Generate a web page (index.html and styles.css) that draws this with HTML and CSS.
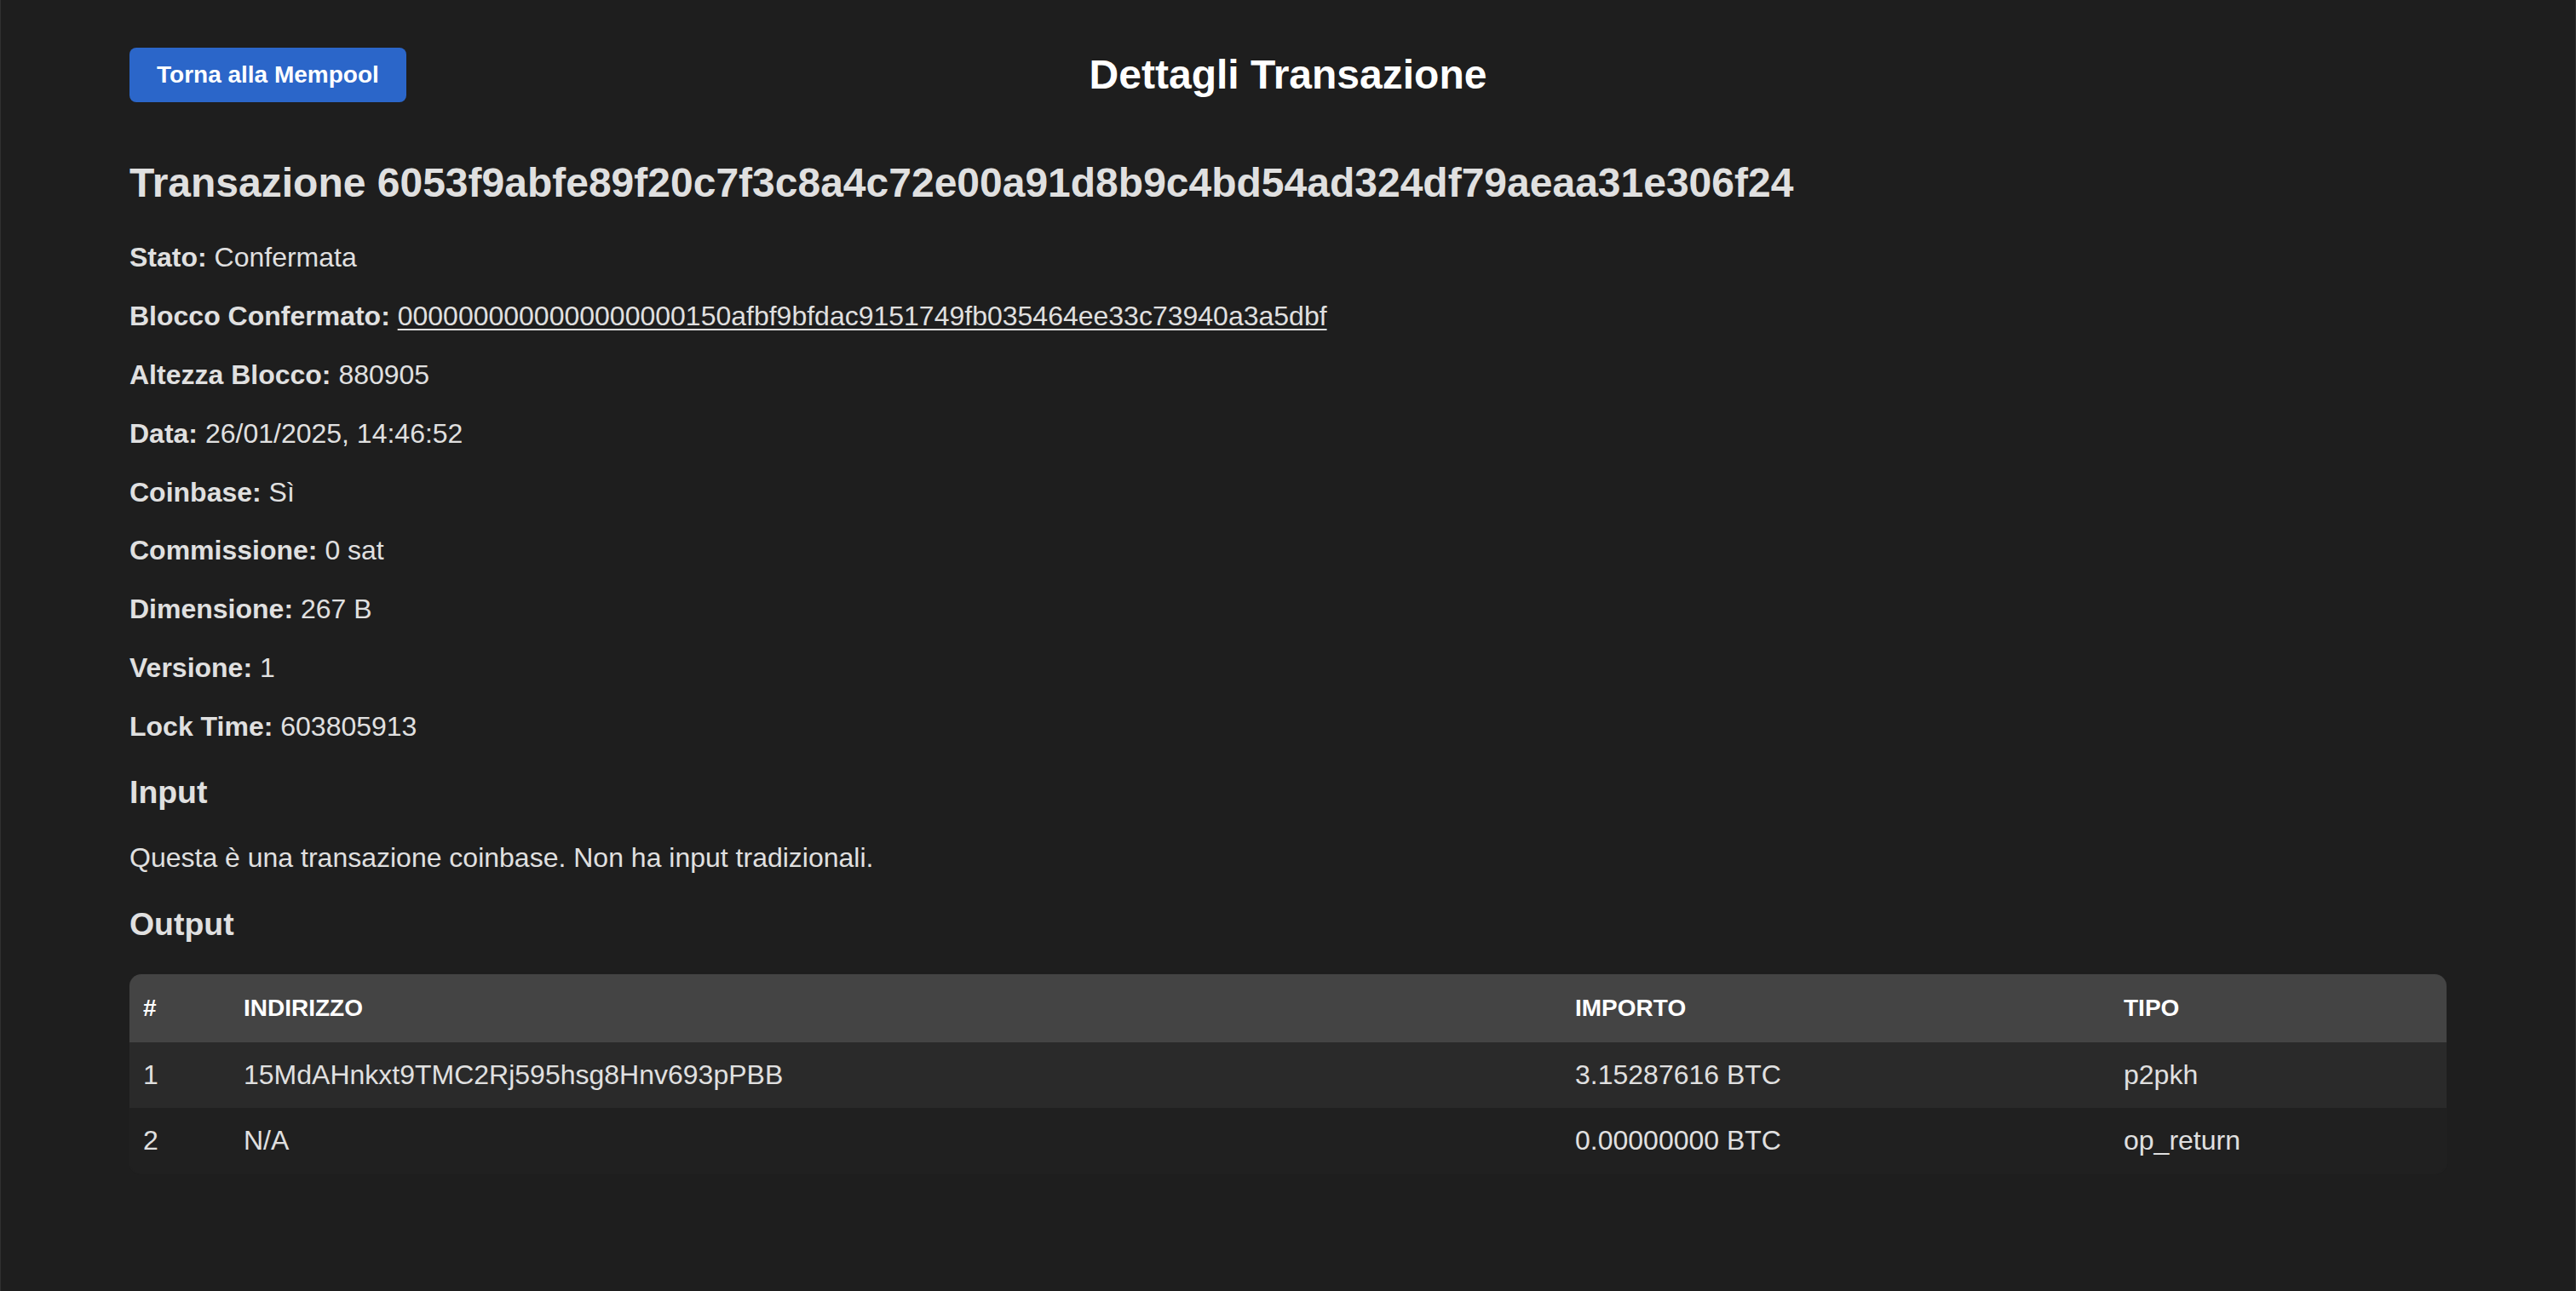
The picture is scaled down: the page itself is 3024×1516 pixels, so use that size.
FILE: index.html
```html
<!DOCTYPE html>
<html lang="it">
<head>
<meta charset="utf-8">
<title>Dettagli Transazione</title>
<link rel="stylesheet" href="styles.css">
</head>
<body>
<div class="page">
  <div class="container">
    <header class="header">
      <a class="back-btn" href="#">Torna alla Mempool</a>
      <h1 class="page-title">Dettagli Transazione</h1>
      <span class="spacer"></span>
    </header>

    <h2 class="tx-title">Transazione 6053f9abfe89f20c7f3c8a4c72e00a91d8b9c4bd54ad324df79aeaa31e306f24</h2>

    <div class="details">
      <p><strong>Stato:</strong> Confermata</p>
      <p><strong>Blocco Confermato:</strong> <a class="block-link" href="#">0000000000000000000150afbf9bfdac9151749fb035464ee33c73940a3a5dbf</a></p>
      <p><strong>Altezza Blocco:</strong> 880905</p>
      <p><strong>Data:</strong> 26/01/2025, 14:46:52</p>
      <p><strong>Coinbase:</strong> Sì</p>
      <p><strong>Commissione:</strong> 0 sat</p>
      <p><strong>Dimensione:</strong> 267 B</p>
      <p><strong>Versione:</strong> 1</p>
      <p><strong>Lock Time:</strong> 603805913</p>
    </div>

    <h3 class="section-title">Input</h3>
    <p>Questa è una transazione coinbase. Non ha input tradizionali.</p>

    <h3 class="section-title">Output</h3>
    <table class="out-table">
      <colgroup>
        <col class="c-num">
        <col class="c-addr">
        <col class="c-amt">
        <col class="c-type">
      </colgroup>
      <thead>
        <tr><th>#</th><th>Indirizzo</th><th>Importo</th><th>Tipo</th></tr>
      </thead>
      <tbody>
        <tr class="row-odd"><td>1</td><td>15MdAHnkxt9TMC2Rj595hsg8Hnv693pPBB</td><td>3.15287616 BTC</td><td>p2pkh</td></tr>
        <tr class="row-even"><td>2</td><td>N/A</td><td>0.00000000 BTC</td><td>op_return</td></tr>
      </tbody>
    </table>
  </div>
</div>
</body>
</html>
```

FILE: styles.css
```css
html, body {
  margin: 0;
  padding: 0;
  background: #1e1e1e;
}

body {
  font-family: "Liberation Sans", Arial, Helvetica, sans-serif;
  font-size: 32px;
  color: #e0e0e0;
}

.page {
  min-height: 100vh;
  box-shadow: inset 1px 0 0 #303030, inset -1px 0 0 #303030;
}

.container {
  max-width: 2800px;
  margin: 0 auto;
  padding: 28px 40px 40px;
  box-sizing: border-box;
}

.header {
  display: grid;
  grid-template-columns: 1fr auto 1fr;
  align-items: center;
}

.back-btn {
  justify-self: start;
  display: inline-block;
  background: #2b66c9;
  color: #ffffff;
  font-weight: bold;
  font-size: 28px;
  line-height: 32px;
  padding: 16px 32px;
  border-radius: 8px;
  text-decoration: none;
}

.page-title {
  font-size: 48px;
  font-weight: bold;
  color: #ffffff;
  margin: 32px 0;
  line-height: 1.15;
  text-align: center;
}

.tx-title {
  font-size: 48px;
  font-weight: bold;
  color: #e0e0e0;
  margin: 40px 0 42px;
  line-height: 1.15;
}

.details p,
.container > p {
  margin: 32px 0;
  line-height: 1.15;
}

.block-link {
  color: #e0e0e0;
  text-decoration: underline;
  text-decoration-thickness: 2px;
  text-underline-offset: 4px;
}

.section-title {
  font-size: 37.44px;
  font-weight: bold;
  margin: 37.44px 0;
  line-height: 1.15;
}

.out-table {
  width: 100%;
  table-layout: fixed;
  border-collapse: separate;
  border-spacing: 0;
  background: #202020;
  border-radius: 14px;
  overflow: hidden;
  box-shadow: 0 0 2px rgba(70, 70, 70, 0.25);
}

.c-num { width: 118px; }
.c-addr { width: 1563px; }
.c-amt { width: 644px; }
.c-type { width: auto; }

.out-table th {
  background: #444444;
  color: #ffffff;
  font-size: 28px;
  font-weight: bold;
  text-transform: uppercase;
  text-align: left;
  line-height: 32px;
  padding: 24px 16px;
}

.out-table td {
  font-size: 32px;
  line-height: 37px;
  padding: 20px 16px;
  text-align: left;
  color: #e0e0e0;
}

.row-odd td {
  background: #2a2a2a;
}

.row-even td {
  background: #202020;
}
```
